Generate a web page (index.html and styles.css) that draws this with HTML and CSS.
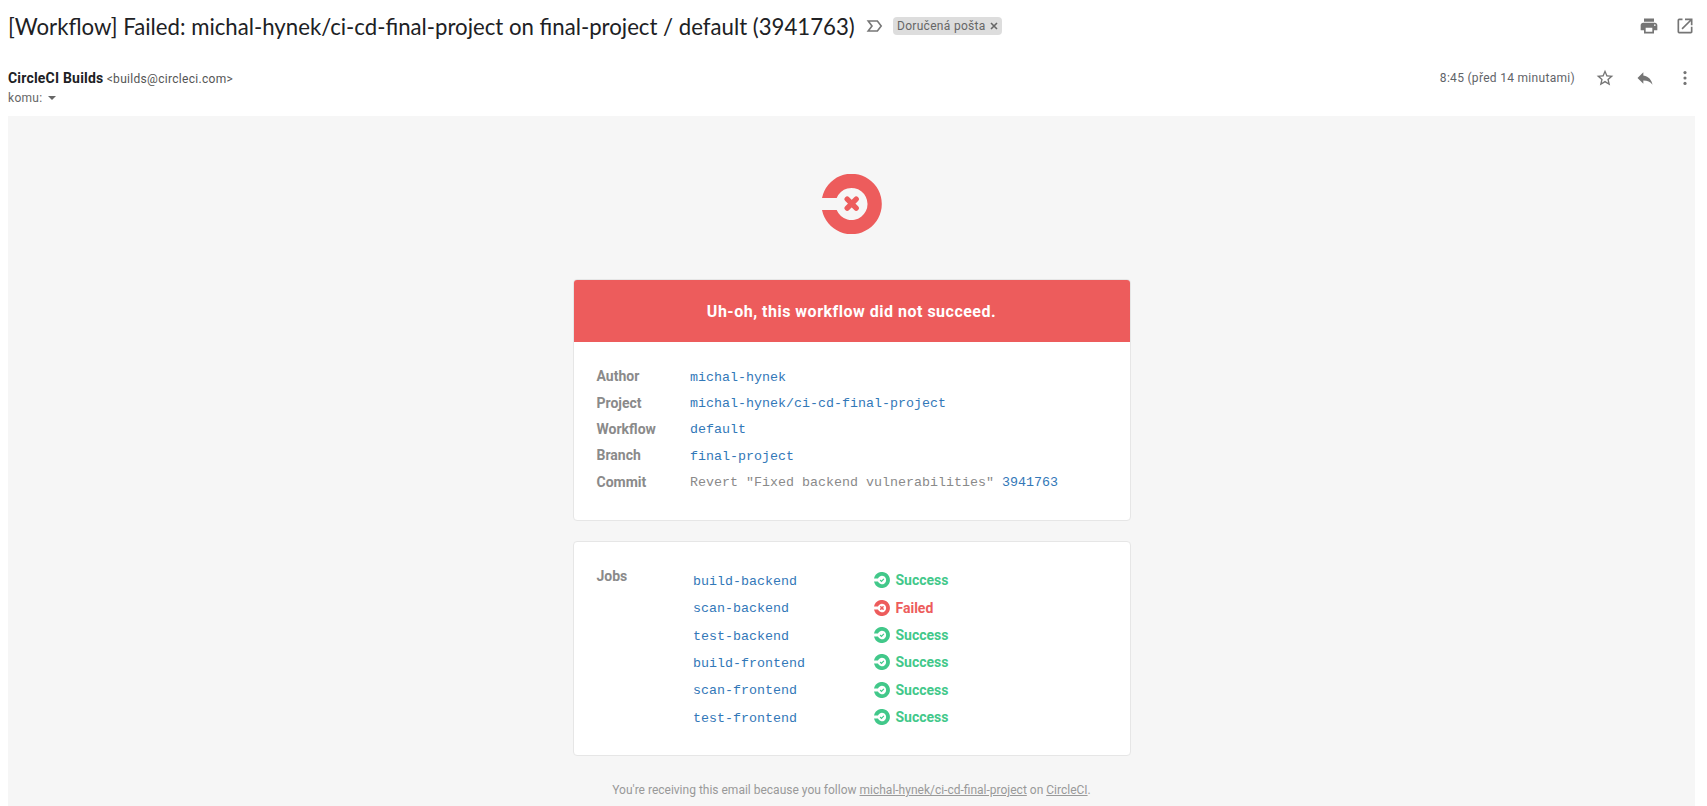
FILE: index.html
```html
<!DOCTYPE html>
<html lang="cs">
<head>
<meta charset="utf-8">
<title>[Workflow] Failed</title>
<link rel="stylesheet" href="styles.css">
</head>
<body>
<svg class="defs" width="0" height="0">
  <symbol id="ring" viewBox="0 0 60 60"><path d="M0 24A30.200 30.200 0 1 1 0 36H14.700A16 16 0 1 0 14.700 24Z" fill="currentColor"/></symbol>
  <symbol id="failed" viewBox="0 0 60 60"><use href="#ring"/><path d="M25.200 25.200l9 9M34.200 25.200L25.200 34.200" stroke="currentColor" stroke-width="5.400" stroke-linecap="round"/></symbol>
  <symbol id="success" viewBox="0 0 60 60"><use href="#ring"/><path d="M23 30l5 5 9-9" fill="none" stroke="currentColor" stroke-width="4.500"/></symbol>
</svg>
<header class="subject">
  <h1 class="title">[Workflow] Failed: michal-hynek/ci-cd-final-project on final-project / default (3941763)</h1>
  <svg class="marker" width="18" height="14" viewBox="0 0 18 14"><path d="M3.200 2H12.400L16.200 7L12.400 12H3.200L7 7Z" fill="none" stroke="#777" stroke-width="1.6"/></svg>
  <span class="chip">Doručená pošta<svg width="8" height="8" viewBox="0 0 8 8"><path d="M1 1l6 6M7 1L1 7" stroke="#666" stroke-width="1.6"/></svg></span>
  <div class="tools">
    <svg width="20" height="20" viewBox="0 0 24 24" fill="#757575"><path d="M19 8H5c-1.66 0-3 1.34-3 3v6h4v4h12v-4h4v-6c0-1.66-1.34-3-3-3zm-3 11H8v-5h8v5zm3-7c-.55 0-1-.45-1-1s.45-1 1-1 1 .45 1 1-.45 1-1 1zm-1-9H6v4h12V3z"/></svg>
    <svg width="20" height="20" viewBox="0 0 24 24" fill="#757575"><path d="M19 19H5V5h4V3H5a2 2 0 0 0-2 2v14a2 2 0 0 0 2 2h14c1.1 0 2-.9 2-2v-6h-2v6zM12 3v2h5.590l-9.830 9.830 1.410 1.410L19 6.410V11h2V3z"/></svg>
  </div>
</header>
<section class="sender">
  <div class="who">
    <div class="from"><b class="name">CircleCI Builds</b> <span>&lt;builds@circleci.com&gt;</span></div>
    <div class="to">komu: <i class="caret"></i></div>
  </div>
  <div class="meta">
    <span class="time">8:45 (před 14 minutami)</span>
    <svg width="20" height="20" viewBox="0 0 24 24" fill="#757575"><path d="M22 9.24l-7.19-.62L12 2 9.19 8.63 2 9.24l5.46 4.73L5.82 21 12 17.27 18.18 21l-1.63-7.03L22 9.24zM12 15.4l-3.76 2.27 1-4.28-3.32-2.88 4.38-.38L12 6.1l1.71 4.04 4.38.38-3.32 2.88 1 4.28L12 15.4z"/></svg>
    <svg width="20" height="20" viewBox="0 0 24 24" fill="#757575"><path d="M10 9V5l-7 7 7 7v-4.1c5 0 8.500 1.600 11 5.100-1-5-4-10-11-11z"/></svg>
    <svg width="20" height="20" viewBox="0 0 24 24" fill="#757575"><circle cx="12" cy="5.500" r="1.900"/><circle cx="12" cy="12" r="1.900"/><circle cx="12" cy="18.500" r="1.900"/></svg>
  </div>
</section>
<main class="mail">
  <svg class="logo" width="60" height="60"><use href="#failed"/></svg>
  <section class="card">
    <h2 class="banner">Uh-oh, this workflow did not succeed.</h2>
    <dl class="details">
      <dt>Author</dt><dd><a>michal-hynek</a></dd>
      <dt>Project</dt><dd><a>michal-hynek/ci-cd-final-project</a></dd>
      <dt>Workflow</dt><dd><a>default</a></dd>
      <dt>Branch</dt><dd><a>final-project</a></dd>
      <dt>Commit</dt><dd>Revert "Fixed backend vulnerabilities" <a>3941763</a></dd>
    </dl>
  </section>
  <section class="card jobs">
    <h3 class="label">Jobs</h3>
    <ul class="list">
      <li><a>build-backend</a><span class="status"><svg width="16" height="16"><use href="#success"/></svg>Success</span></li>
      <li><a>scan-backend</a><span class="status bad"><svg width="16" height="16"><use href="#failed"/></svg>Failed</span></li>
      <li><a>test-backend</a><span class="status"><svg width="16" height="16"><use href="#success"/></svg>Success</span></li>
      <li><a>build-frontend</a><span class="status"><svg width="16" height="16"><use href="#success"/></svg>Success</span></li>
      <li><a>scan-frontend</a><span class="status"><svg width="16" height="16"><use href="#success"/></svg>Success</span></li>
      <li><a>test-frontend</a><span class="status"><svg width="16" height="16"><use href="#success"/></svg>Success</span></li>
    </ul>
  </section>
  <p class="note">You're receiving this email because you follow <u>michal-hynek/ci-cd-final-project</u> on <u>CircleCI</u>.</p>
</main>
</body>
</html>
```
FILE: styles.css
```css
* { box-sizing: border-box; margin: 0; padding: 0; }
body { height: 806px; overflow: hidden; background: #fff; font-family: Roboto, "Liberation Sans", sans-serif; color: #202124; display: flex; flex-direction: column; }
svg { display: block; flex: none; }
.defs { position: absolute; }
.subject { height: 52px; padding: 0 12px 0 8px; display: flex; align-items: center; }
.title { font: 400 22.19px/28px Lato, Roboto, sans-serif; white-space: nowrap; width: 857px; padding-top: 1px; }
.marker { margin-right: 10px; }
.chip { height: 18px; padding: 0 4px; border-radius: 4px; background: #ddd; color: #666; font-size: 12px; letter-spacing: .3px; display: flex; align-items: center; gap: 4px; white-space: nowrap; }
.tools { margin-left: auto; display: flex; gap: 16px; }
.sender { height: 64px; padding: 16px 12px 0 8px; display: flex; justify-content: space-between; }
.from { height: 20px; line-height: 20px; font-size: 12px; letter-spacing: .3px; color: #555; }
.name { font-size: 14px; letter-spacing: .2px; color: #202124; }
.to { height: 20px; line-height: 20px; font-size: 12px; letter-spacing: .3px; color: #666; display: flex; align-items: center; gap: 6px; }
.caret { border: 4px solid transparent; border-top-color: #666; border-bottom: 0; }
.meta { height: 20px; display: flex; align-items: center; gap: 20px; }
.time { font-size: 12px; letter-spacing: .3px; color: #5f6368; }
.mail { flex: 1; margin: 0 12px 0 8px; background: #f6f6f6; display: flex; flex-direction: column; align-items: center; padding-top: 58px; }
.logo { color: #ed5c5c; margin-bottom: 45px; }
.card { width: 558px; border: 1px solid #e6e6e6; border-radius: 4px; background: #fff; overflow: hidden; height: 242px; margin-bottom: 20px; flex: none; }
.banner { height: 62px; line-height: 64px; background: #ed5c5c; color: #fff; text-align: center; font-size: 16px; letter-spacing: .5px; }
.details { padding: 21px 22px 21px 23px; display: grid; grid-template-columns: 93.5px 1fr; grid-auto-rows: 26.4px; align-items: center; }
dt, .label { font-size: 14px; font-weight: 700; color: #8a8a8a; }
dd, .list a { font: 13.33px "Liberation Mono", monospace; color: #8a8a8a; padding-top: 2px; }
.card a { color: #3278b8; }
.card.jobs { height: 215px; padding: 24.6px 22px 24px 23px; display: flex; }
.label { width: 96.5px; line-height: 19px; }
.list { list-style: none; }
.list li { height: 27.4px; display: grid; grid-template-columns: 181px 100px; align-items: center; }
.status { font-size: 14px; font-weight: 700; color: #42c88a; display: flex; align-items: center; gap: 5.5px; }
.status.bad { color: #ed5c5c; }
.note { font-size: 12px; line-height: 16px; color: #999; margin-top: 6px; white-space: nowrap; }
```
